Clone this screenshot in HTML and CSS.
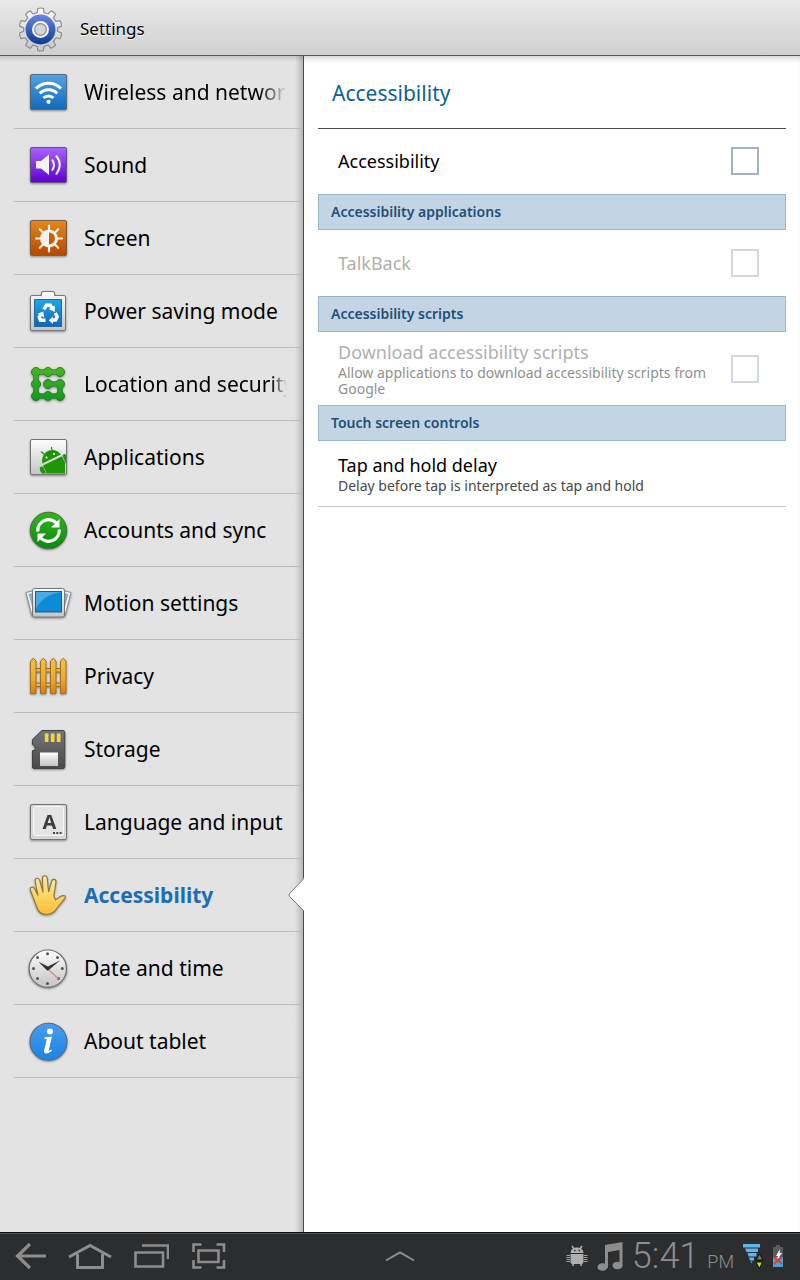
FILE: index.html
```html
<!DOCTYPE html>
<html lang="en">
<head>
<meta charset="utf-8">
<meta name="viewport" content="width=device-width, initial-scale=1">
<title>Settings</title>
<link rel="stylesheet" href="styles.css">
</head>
<body>
<svg class="defs" aria-hidden="true">
  <defs>
    <linearGradient id="blue" x2="0" y2="1"><stop offset="0" stop-color="#51a3ea"/><stop offset="1" stop-color="#1268b8"/></linearGradient>
    <linearGradient id="purple" x2="0" y2="1"><stop offset="0" stop-color="#a763fb"/><stop offset="1" stop-color="#5e00d2"/></linearGradient>
    <linearGradient id="orange" x2="0" y2="1"><stop offset="0" stop-color="#e28a18"/><stop offset="1" stop-color="#b64700"/></linearGradient>
    <linearGradient id="silver" x2="0" y2="1"><stop offset="0" stop-color="#fdfdfd"/><stop offset="1" stop-color="#c4c4c4"/></linearGradient>
    <linearGradient id="cyan" x2="0" y2="1"><stop offset="0" stop-color="#23a6e8"/><stop offset="1" stop-color="#0d66b8"/></linearGradient>
    <linearGradient id="green" x2="0" y2="1"><stop offset="0" stop-color="#35b41c"/><stop offset="1" stop-color="#078a10"/></linearGradient>
    <linearGradient id="chain" gradientUnits="userSpaceOnUse" x1="0" x2="0" y1="7" y2="41"><stop offset="0" stop-color="#48b81c"/><stop offset="1" stop-color="#0c9a1c"/></linearGradient>
    <linearGradient id="gold" x2="0" y2="1"><stop offset="0" stop-color="#f6c338"/><stop offset=".6" stop-color="#eeaa22"/><stop offset="1" stop-color="#dc7c10"/></linearGradient>
    <linearGradient id="slate" x2="0" y2="1"><stop offset="0" stop-color="#747474"/><stop offset="1" stop-color="#4a4a4a"/></linearGradient>
    <linearGradient id="skin" x2="0" y2="1"><stop offset="0" stop-color="#fbeaa6"/><stop offset="1" stop-color="#fbbf2f"/></linearGradient>
    <linearGradient id="info" x2="0" y2="1"><stop offset="0" stop-color="#4a9cee"/><stop offset="1" stop-color="#1a82e6"/></linearGradient>
    <linearGradient id="ring" x2="0" y2="1"><stop offset="0" stop-color="#6886e0"/><stop offset="1" stop-color="#0b3c94"/></linearGradient>
  </defs>
</svg>

<header class="topbar">
  <svg class="topbar-icon" viewBox="0 0 48 48" aria-hidden="true">
    <g fill="url(#silver)" stroke="#8b8b8b" stroke-width="1.2" stroke-linejoin="round">
      <path d="M21.5 7.6 L22 3.2 Q25 2.2 28 3.2 L28.500 7.600 L32.800 9 L35.800 5.700 Q38.800 6.700 40.600 9.200 L38.400 13 L41 16.700 L45.200 15.800 Q47 18.500 46.800 21.600 L42.600 23.400 L42.600 27 L46.800 28.800 Q47 32 45.200 34.600 L41 33.700 L38.400 37.400 L40.600 41.200 Q38.800 43.700 35.800 44.700 L32.800 41.400 L28.500 42.800 L28 47 Q25 48 22 47 L21.500 42.800 L17.200 41.400 L14.200 44.700 Q11.200 43.700 9.400 41.200 L11.600 37.400 L9 33.700 L4.800 34.600 Q3 32 3.200 28.800 L7.400 27 L7.400 23.400 L3.200 21.600 Q3 18.500 4.800 15.800 L9 16.700 L11.600 13 L9.400 9.200 Q11.200 6.700 14.200 5.700 L17.200 9 Z" transform="translate(.6 .4) scale(.96)"/>
    </g>
    <circle cx="24.500" cy="24.500" r="15" fill="url(#ring)"/>
    <circle cx="24.500" cy="24.500" r="8.500" fill="#f4f4f4"/>
    <circle cx="24.500" cy="24.500" r="5.800" fill="#d4d5d7" stroke="#8c8c90" stroke-width="1.200"/>
  </svg>
  <h1 class="topbar-title">Settings</h1>
</header>

<div class="content">
  <nav class="sidebar" aria-label="Settings categories">
    <a class="item" href="#wireless">
      <svg class="icon" viewBox="0 0 48 48" aria-hidden="true">
        <rect x="6.500" y="6.500" width="36" height="35" rx="1.500" fill="url(#blue)" stroke="#55697d"/>
        <g fill="none" stroke="#fff" stroke-width="3"><path d="M12 20.500a17.500 17.500 0 0 1 25 0"/><path d="M15.800 25.500a12 12 0 0 1 17.400 0"/><path d="M19.500 30a7 7 0 0 1 10 0"/></g>
        <circle cx="24.500" cy="33.800" r="2.100" fill="#fff"/>
      </svg>
      <span class="label fade">Wireless and networks</span>
    </a>
    <a class="item" href="#sound">
      <svg class="icon" viewBox="0 0 48 48" aria-hidden="true">
        <rect x="6.500" y="6.500" width="36" height="35" rx="1.500" fill="url(#purple)" stroke="#64527c"/>
        <path d="M12 20h5l8-6.500v20.500l-8-6.500h-5z" fill="#f4f4f4"/>
        <g fill="none" stroke="#f4f4f4" stroke-width="2"><path d="M28 18.500q4 5.500 0 11"/><path d="M32 14.500q7.500 9 0 19"/></g>
      </svg>
      <span class="label">Sound</span>
    </a>
    <a class="item" href="#screen">
      <svg class="icon" viewBox="0 0 48 48" aria-hidden="true">
        <rect x="6.500" y="6.500" width="36" height="35" rx="1.500" fill="url(#orange)" stroke="#7d5d41"/>
        <g stroke="#f6f3ee" stroke-width="2.200" stroke-linecap="round"><path d="M25 11.500v26M12 24.500h26M15.800 15.300l18.400 18.400M34.200 15.300l-18.400 18.400"/></g>
        <circle cx="25" cy="24.500" r="9" fill="#f6f3ee"/>
        <path d="M25 18.500a6 6 0 0 1 0 12z" fill="#c4600c"/>
      </svg>
      <span class="label">Screen</span>
    </a>
    <a class="item" href="#power">
      <svg class="icon" viewBox="0 0 48 48" aria-hidden="true">
        <path d="M8 8.500h9.500v-2.500q0-1.500 1.500-1.500h10q1.500 0 1.500 1.500v2.500h9.500q1.500 0 1.500 1.500v32q0 1.500-1.500 1.500h-32q-1.500 0-1.500-1.500v-32q0-1.500 1.500-1.500z" fill="url(#silver)" stroke="#777"/>
        <rect x="10.500" y="12.500" width="27" height="27" fill="url(#cyan)" stroke="#246a9e"/>
        <g fill="none" stroke="#fff" stroke-width="3.400"><path d="M19.800 22.300l2.500-4h4l1.600 2.600"/><path d="M31.200 26l2 3.800-1.600 3.200h-4"/><path d="M21.500 33.200h-5l-1.200-3 1.600-3"/></g>
        <path d="M30.800 18.500v6.500l-5.800-2.800zM29 29.500v7.400l-4.200-3.700zM13.500 26.800l5.700-2.300 1 6z" fill="#fff"/>
      </svg>
      <span class="label">Power saving mode</span>
    </a>
    <a class="item" href="#location">
      <svg class="icon" viewBox="0 0 48 48" aria-hidden="true">
        <path d="M36 12H12V36H36V24H24" fill="none" stroke="#407840" stroke-width="5.500"/>
        <g fill="url(#chain)" stroke="#357a32" stroke-width="1"><circle cx="12" cy="12" r="4.500"/><circle cx="24" cy="12" r="4.500"/><circle cx="36" cy="12" r="4.500"/><circle cx="12" cy="24" r="4.500"/><circle cx="24" cy="24" r="4.500"/><circle cx="36" cy="24" r="4.500"/><circle cx="12" cy="36" r="4.500"/><circle cx="24" cy="36" r="4.500"/><circle cx="36" cy="36" r="4.500"/></g>
        <path d="M36 12H12V36H36V24H24" fill="none" stroke="url(#chain)" stroke-width="3.800"/>
      </svg>
      <span class="label fade-short">Location and security</span>
    </a>
    <a class="item" href="#applications">
      <svg class="icon" viewBox="0 0 48 48" aria-hidden="true">
        <rect x="6.500" y="6.500" width="36" height="35" rx="1.500" fill="url(#silver)" stroke="#747474"/>
        <g fill="#1f9608">
          <path d="M18.300 30.500C16 18 30 12.500 37 21.500z"/>
          <path d="M19 32.500L38 23.200 41 29.500V40.500H22.500z"/>
          <path d="M38.500 22.500q2-2.500 3.500-.5v9z"/>
          <path d="M16 34.500q1.500-2 3.500 0l2.500 6h-4q-3-3-2-6z"/>
        </g>
        <path d="M20.500 21.500l-3.500-3M28 18l-.5-4" stroke="#1f9608" stroke-width="1.200"/>
        <circle cx="22.500" cy="24.500" r="1.100" fill="#fff"/><circle cx="30" cy="21" r="1.100" fill="#fff"/>
      </svg>
      <span class="label">Applications</span>
    </a>
    <a class="item" href="#accounts">
      <svg class="icon" viewBox="0 0 48 48" aria-hidden="true">
        <circle cx="24.500" cy="24.500" r="18.300" fill="url(#green)" stroke="#4d6b4a"/>
        <g fill="none" stroke="#fff" stroke-width="3.200"><path d="M13.800 25.500a10.800 10.800 0 0 1 18.500-8.500"/><path d="M35.200 23.500a10.800 10.800 0 0 1-18.500 8.500"/></g>
        <path d="M35.500 13v8.500h-8.500zM13.500 27.500h8.500l-8.500 8.500z" fill="#fff"/>
      </svg>
      <span class="label">Accounts and sync</span>
    </a>
    <a class="item" href="#motion">
      <svg class="icon" viewBox="0 0 48 48" aria-hidden="true">
        <path d="M2 13.500l8-2v25l-2 .5zM47 13.500l-8-2v25l2 .5z" fill="#f2f2f2" stroke="#8a8a8a"/>
        <path d="M4.500 15l4-1v15zM44.500 15l-4-1v15z" fill="#7fb2cc"/>
        <rect x="8.500" y="9.500" width="32" height="28.500" rx="2" fill="url(#silver)" stroke="#777"/>
        <rect x="11.500" y="12.500" width="26" height="20.500" fill="#0d8bd4" stroke="#1d5c88"/>
        <path d="M12 13h25.500Q18 16 12 30z" fill="#48abe2"/>
      </svg>
      <span class="label">Motion settings</span>
    </a>
    <a class="item" href="#privacy">
      <svg class="icon" viewBox="0 0 48 48" aria-hidden="true">
        <path d="M9 16.500h31v3.500h-31zM9 31h31v3.500h-31z" fill="#f0b83a" stroke="#8a6a35"/>
        <g fill="url(#gold)" stroke="#a0702a"><path d="M6.500 41.500V9L9.300 6.300 12 9V41.500z"/><path d="M16.500 41.500V9L19.300 6.300 22 9V41.500z"/><path d="M26.500 41.500V9L29.300 6.300 32 9V41.500z"/><path d="M36.500 41.500V9L39.300 6.300 42 9V41.500z"/></g>
      </svg>
      <span class="label">Privacy</span>
    </a>
    <a class="item" href="#storage">
      <svg class="icon" viewBox="0 0 48 48" aria-hidden="true">
        <path d="M18 5.500h21q1.800 0 1.800 1.800v34.400q0 1.800-1.800 1.800h-29q-1.500 0-1.500-1.500V25.500h2.500v-4l-2.500-2V14.500z" fill="url(#slate)" stroke="#444"/>
        <path d="M20.800 8.500h3.700v8.500h-3.700zM26.800 8.500h3.700v8.500h-3.700zM32.800 8.500h3.700v8.500h-3.700z" fill="#f4d548"/>
        <rect x="16" y="27.500" width="18" height="13.500" fill="url(#silver)"/>
      </svg>
      <span class="label">Storage</span>
    </a>
    <a class="item" href="#language">
      <svg class="icon" viewBox="0 0 48 48" aria-hidden="true">
        <rect x="6.500" y="6.500" width="36" height="35" rx="1.500" fill="#d6d6d6" stroke="#747474"/>
        <rect x="9.500" y="8.500" width="30" height="29" rx="2" fill="#e4e4e4" stroke="#f8f8f8"/>
        <text class="key-letter" x="25.500" y="31" text-anchor="middle">A</text>
        <path d="M29 34h2v2h-2zM32.300 34h2v2h-2zM35.600 34h2v2h-2z" fill="#444"/>
      </svg>
      <span class="label">Language and input</span>
    </a>
    <a class="item current" href="#accessibility" aria-current="page">
      <svg class="icon" viewBox="0 0 48 48" aria-hidden="true">
        <path d="M12 34L6.500 19.500Q5.600 17 7.600 16.300 9.400 15.700 10.600 17.800L14 24.500 11.200 10.500Q10.800 7.700 13 7.300 15 7 15.700 9.500L19 21.500 18.500 7.500Q18.500 4.700 20.800 4.700 23 4.700 23.200 7.300L24.600 21 27.600 10.300Q28.300 8 30.300 8.400 32.400 8.900 31.900 11.500L29.800 25 31.500 29 36.500 25.500Q39.500 24 41 25 42 26 40.500 27.800L33.500 36.500Q29.500 43.500 22.500 43.500 14.500 43.500 12 34Z" fill="url(#skin)" stroke="#8d7441" stroke-width="1.100"/>
      </svg>
      <span class="label">Accessibility</span>
      <svg class="pointer" viewBox="0 0 16 34" aria-hidden="true"><path d="M16 0L1.500 15.500Q.5 17 1.500 18.500L16 33z" fill="#fff"/><path d="M15.500 1L1.500 15.500Q.5 17 1.500 18.500L15.500 32.500" fill="none" stroke="#777"/></svg>
    </a>
    <a class="item" href="#date">
      <svg class="icon" viewBox="0 0 48 48" aria-hidden="true">
        <circle cx="23.800" cy="24.700" r="18.700" fill="url(#silver)" stroke="#6e6e6e" stroke-width="1.200"/>
        <g fill="#555"><circle cx="23.500" cy="9.800" r="1.500"/><circle cx="33.500" cy="13.500" r="1.500"/><circle cx="38.300" cy="24.500" r="1.500"/><circle cx="34.500" cy="34.500" r="1.500"/><circle cx="23.500" cy="39.500" r="1.500"/><circle cx="13.500" cy="34.500" r="1.500"/><circle cx="9.500" cy="24.500" r="1.500"/><circle cx="13.500" cy="13.500" r="1.500"/></g>
        <path d="M22.500 23.500l12 11.500" stroke="#d08a80" stroke-width="1.200"/>
        <path d="M14.500 17.800l9.500 4.700 12.300-6.300-11.500 9.800q-1 1-2.200 0z" fill="#333"/>
      </svg>
      <span class="label">Date and time</span>
    </a>
    <a class="item" href="#about">
      <svg class="icon" viewBox="0 0 48 48" aria-hidden="true">
        <circle cx="24.500" cy="24.700" r="18.500" fill="url(#info)" stroke="#566c84" stroke-width="1.100"/>
        <circle cx="26" cy="14.500" r="3" fill="#fff"/>
        <path d="M20.500 20.500L28 19.500 24.800 33Q24.600 34.500 27.500 32.500L28 33.500Q24.500 37 21.500 36.500 19.500 36 20.200 33L22.700 22.500Q22.700 21.500 20.300 21.700Z" fill="#fff"/>
      </svg>
      <span class="label">About tablet</span>
    </a>
  </nav>

  <main class="panel">
    <h2 class="panel-title">Accessibility</h2>
    <label class="row">
      <span class="row-text"><span class="row-name">Accessibility</span></span>
      <input class="check" type="checkbox">
    </label>
    <h3 class="group">Accessibility applications</h3>
    <label class="row disabled">
      <span class="row-text"><span class="row-name">TalkBack</span></span>
      <input class="check" type="checkbox" disabled>
    </label>
    <h3 class="group">Accessibility scripts</h3>
    <label class="row disabled">
      <span class="row-text"><span class="row-name">Download accessibility scripts</span>
      <span class="row-note">Allow applications to download accessibility scripts from Google</span></span>
      <input class="check" type="checkbox" disabled>
    </label>
    <h3 class="group">Touch screen controls</h3>
    <button class="row last" type="button">
      <span class="row-text"><span class="row-name">Tap and hold delay</span>
      <span class="row-note">Delay before tap is interpreted as tap and hold</span></span>
    </button>
  </main>
</div>

<footer class="sysbar">
  <div class="keys">
    <button class="key" type="button" aria-label="Back"><svg width="32" height="30" viewBox="0 0 32 30"><path d="M31 15H3M15 3L2.500 15 15 27" fill="none" stroke="#8d8d8d" stroke-width="3.200"/></svg></button>
    <button class="key" type="button" aria-label="Home"><svg width="44" height="30" viewBox="0 0 44 30"><path d="M1 16L22 4.500 43 16M9.500 13v13.500h25V13" fill="none" stroke="#8d8d8d" stroke-width="3"/></svg></button>
    <button class="key" type="button" aria-label="Recent apps"><svg width="36" height="30" viewBox="0 0 36 30"><path d="M9 4.500h26V18M2.500 11.500h27.500v14H2.500z" fill="none" stroke="#8d8d8d" stroke-width="2.600"/></svg></button>
    <button class="key" type="button" aria-label="Screenshot"><svg width="36" height="30" viewBox="0 0 36 30"><path d="M3.500 11V3.500h8M26.500 3.500h7.500V11M34 19v7.500h-7.500M11.500 26.500h-8V19M8.500 9.500h20v11.500h-20z" fill="none" stroke="#8d8d8d" stroke-width="2.600"/></svg></button>
  </div>
  <button class="key" type="button" aria-label="Show tray"><svg width="30" height="14" viewBox="0 0 30 14"><path d="M1 11.500L15 3.500 29 11.500" fill="none" stroke="#8d8d8d" stroke-width="2"/></svg></button>
  <div class="status">
    <svg width="22" height="22" viewBox="0 0 22 22" aria-hidden="true"><path d="M4.500 8q.5-5.500 6.500-5.500T17.500 8zM4.500 9h13v8q0 2-2 2H6.500q-2 0-2-2z" fill="#b0b0b0"/><path d="M6 1l2 3M16 1l-2 3M7 19v2M15 19v2" stroke="#b0b0b0" stroke-width="1.500"/><path d="M.5 10.500H4M.5 12.500H4M.5 14.500H4M.5 16.500H4M18 10.500h3.500M18 12.500h3.500M18 14.500h3.500M18 16.500h3.500" stroke="#a0a0a0"/><path d="M8 5.500h1.500M12.500 5.500H14" stroke="#333" stroke-width="1.500"/></svg>
    <svg width="28" height="30" viewBox="0 0 28 30" aria-hidden="true"><path d="M9 4L26.500 1V25h-3V9L12 11V27H9z" fill="#8d8d8d"/><ellipse cx="6.500" cy="26" rx="5" ry="3.800" fill="#8d8d8d"/><ellipse cx="21.500" cy="24.500" rx="5" ry="3.800" fill="#8d8d8d"/></svg>
    <time class="clock">5:41</time>
    <span class="meridiem">PM</span>
    <svg width="22" height="26" viewBox="0 0 22 26" aria-hidden="true"><path d="M1 1h17v3.500H1zM3 5.500h13v3.500H4.500zM5.500 10h9v3.500H6.500zM7 14.500h5v3H8zM8.500 18.500h2l-1 2z" fill="#5ab8ea"/><path d="M14 17l3.500-6 3.500 6z" fill="#777" stroke="#111"/><path d="M14 19h6.500l-3.200 6.500z" fill="#a4ee12" stroke="#111"/></svg>
    <svg width="12" height="24" viewBox="0 0 12 24" aria-hidden="true"><path d="M4 1h4v2h3v20H1V3h3z" fill="#5a5a5a"/><path d="M1 13h10v10H1z" fill="#48a5dc"/><path d="M8 5L4 12h2l-1 4 5-7H7.500z" fill="#fff"/><path d="M2 13l8 7M10 13l-8 7" stroke="#e23a2c" stroke-width="2"/></svg>
  </div>
</footer>
</body>
</html>
```
FILE: styles.css
```css
* {
  box-sizing: border-box;
}

body {
  margin: 0;
  min-height: 100vh;
  display: flex;
  flex-direction: column;
  background: #fff;
  color: #000;
  font-family: "Noto Sans", "Open Sans", sans-serif;
}

h1, h2, h3 {
  margin: 0;
  font-weight: 400;
}

button {
  margin: 0;
  padding: 0;
  border: 0;
  background: none;
  color: inherit;
  font: inherit;
  text-align: left;
}

svg {
  display: block;
  flex: none;
}

.defs {
  position: absolute;
  width: 0;
  height: 0;
}

.topbar {
  display: flex;
  align-items: center;
  gap: 16px;
  height: 56px;
  padding: 2px 16px 0;
  background: linear-gradient(#e9e9e9, #d0d0d0);
  border-bottom: 1px solid #5a5a5a;
}

.topbar-icon {
  width: 48px;
  height: 48px;
}

.topbar-title {
  font-size: 17px;
  line-height: 24px;
  text-shadow: 0 1px 0 #fff;
}

.content {
  flex: 1;
  display: flex;
  box-shadow: inset 0 6px 6px -4px #0003;
}

.sidebar {
  flex: 0 0 38%;
  min-width: 0;
  padding-left: 14px;
  border-right: 1px solid #4a4a4a;
  background:
    linear-gradient(#0002, #0000) top / 100% 6px no-repeat,
    linear-gradient(to left, #0003, #0000) right / 8px 100% no-repeat,
    #e3e3e3;
}

.item {
  position: relative;
  display: flex;
  align-items: center;
  gap: 12px;
  height: 73px;
  padding: 0 16px 0 10px;
  border-bottom: 1px solid #bdbdbd;
  color: inherit;
  text-decoration: none;
}

.icon {
  width: 48px;
  height: 48px;
  filter: drop-shadow(0 1px 1px #0006);
}

.label {
  flex: 1;
  min-width: 0;
  overflow: hidden;
  font-size: 21px;
  line-height: 32px;
  white-space: nowrap;
}

.fade {
  mask-image: linear-gradient(to left, #0000, #000 28px);
}

.fade-short {
  mask-image: linear-gradient(to left, #0000, #000 16px);
}

.current {
  color: #1b6db8;
  font-weight: 700;
}

.pointer {
  position: absolute;
  right: -1px;
  top: 19px;
  width: 16px;
  height: 34px;
}

.key-letter {
  font: 700 20px "Noto Sans", sans-serif;
  fill: #3c3c3c;
}

.panel {
  flex: 1;
  min-width: 0;
  padding: 0 14px;
}

.panel-title {
  height: 73px;
  margin-bottom: -1px;
  padding: 0 14px;
  border-bottom: 1px solid #4c4c4c;
  color: #0c5f9c;
  font-size: 21px;
  line-height: 74px;
}

.row {
  display: flex;
  align-items: center;
  gap: 20px;
  width: 100%;
  min-height: 66px;
  padding: 8px 27px 8px 20px;
}

.row-text {
  flex: 1;
  display: flex;
  flex-direction: column;
}

.row-name {
  font-size: 18px;
  line-height: 25px;
}

.row-note {
  color: #484848;
  font-size: 14px;
  line-height: 16px;
}

.disabled {
  color: #b0b0b0;
}

.disabled .row-note {
  color: #919191;
}

.last {
  border-bottom: 1px solid #c4c4c4;
}

.check {
  appearance: none;
  flex: none;
  width: 28px;
  height: 28px;
  margin: 0;
  border: 2px solid #a2b2c1;
  background: #fff;
}

.check:checked {
  background: #a2b2c1;
}

.check:disabled {
  border-color: #d1d8df;
}

.group {
  height: 36px;
  padding: 0 12px;
  border: 1px solid #9db6cc;
  background: #c3d5e4;
  color: #1e5078;
  font-size: 14px;
  font-weight: 600;
  line-height: 34px;
}

.sysbar {
  display: grid;
  grid-template-columns: 1fr auto 1fr;
  align-items: center;
  height: 48px;
  padding: 0 16px 2px 15px;
  border-top: 1px solid #0c0c0c;
  background: #2c2d2f;
  box-shadow: inset 0 1px 0 #505152;
}

.keys,
.status {
  display: flex;
  align-items: center;
}

.keys {
  gap: 21px;
}

.status {
  justify-content: flex-end;
  gap: 8px;
  color: #8d8d8d;
  font-family: Roboto, sans-serif;
  font-weight: 300;
}

.clock {
  font-size: 36px;
  line-height: 44px;
}

.meridiem {
  padding-top: 12px;
  font-size: 18px;
  line-height: 24px;
}
```
